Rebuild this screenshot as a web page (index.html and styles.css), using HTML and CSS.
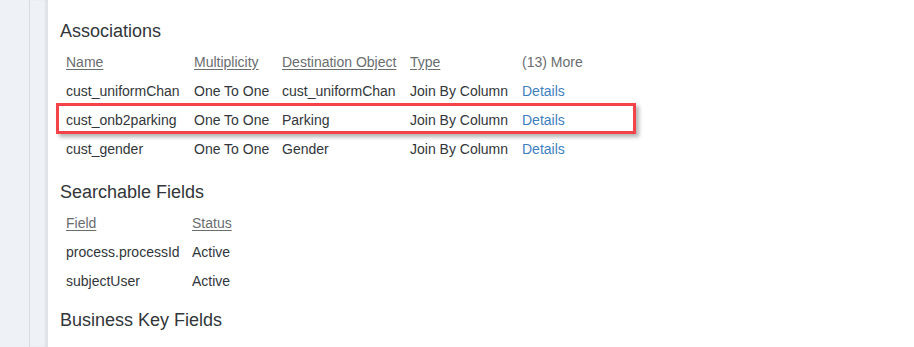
FILE: index.html
```html
<!DOCTYPE html>
<html lang="en">
<head>
    <meta charset="UTF-8">
    <meta name="viewport" content="width=device-width, initial-scale=1.0">
    <title>Object Definition</title>
    <link rel="stylesheet" href="styles.css">
</head>
<body>
    <div class="page">
        <div class="side">
            <div class="rail"></div>
            <div class="gutter"></div>
        </div>

        <div class="content">
            <section class="section">
                <h2>Associations</h2>
                <div class="table-wrap">
                    <table class="grid assoc">
                        <thead>
                            <tr>
                                <th class="c-name"><span>Name</span></th>
                                <th class="c-mult"><span>Multiplicity</span></th>
                                <th class="c-dest"><span>Destination Object</span></th>
                                <th class="c-type"><span>Type</span></th>
                                <th class="more">(13) More</th>
                            </tr>
                        </thead>
                        <tbody>
                            <tr>
                                <td>cust_uniformChan</td>
                                <td>One To One</td>
                                <td>cust_uniformChan</td>
                                <td>Join By Column</td>
                                <td><a href="#">Details</a></td>
                            </tr>
                            <tr>
                                <td>cust_onb2parking</td>
                                <td>One To One</td>
                                <td>Parking</td>
                                <td>Join By Column</td>
                                <td><a href="#">Details</a></td>
                            </tr>
                            <tr>
                                <td>cust_gender</td>
                                <td>One To One</td>
                                <td>Gender</td>
                                <td>Join By Column</td>
                                <td><a href="#">Details</a></td>
                            </tr>
                        </tbody>
                    </table>
                    <!-- annotation box drawn over the second row -->
                    <div class="mark"></div>
                </div>
            </section>

            <section class="section searchable">
                <h2>Searchable Fields</h2>
                <table class="grid search">
                    <thead>
                        <tr>
                            <th class="c-field"><span>Field</span></th>
                            <th><span>Status</span></th>
                        </tr>
                    </thead>
                    <tbody>
                        <tr>
                            <td>process.processId</td>
                            <td>Active</td>
                        </tr>
                        <tr>
                            <td>subjectUser</td>
                            <td>Active</td>
                        </tr>
                    </tbody>
                </table>
            </section>

            <section class="section keys">
                <h2>Business Key Fields</h2>
            </section>
        </div>
    </div>
</body>
</html>
```

FILE: styles.css
```css
:root {
    --text-color: #32363a;
    --label-color: #6a6d70;
    --link-color: #3f7fbf;
    --shell-bg: #eef2f6;
    --shell-line: #d6dce3;
    --mark-color: #f4444a;
}

body {
    margin: 0;
    font-family: "Liberation Sans", Arial, sans-serif;
    color: var(--text-color);
    background: #fff;
}

.page {
    display: flex;
    min-height: 347px;
}

.side {
    display: flex;
    flex-shrink: 0;
    background: var(--shell-bg);
}

.rail {
    width: 29px;
    border-right: 1px solid var(--shell-line);
}

.gutter {
    width: 17px;
    border-right: 1px solid #dfe3e8;
    box-shadow: inset -2px 0 2px rgba(0, 0, 0, 0.06);
}

.content {
    flex: 1;
    padding: 0 0 0 12px;
}

h2 {
    margin: 13px 0 2px;
    font-size: 18px;
    font-weight: normal;
    line-height: 28px;
}

.section:first-child h2 {
    margin-top: 17px;
}

.searchable h2 {
    margin-top: 15px;
}

.keys h2 {
    margin-top: 11px;
}

.grid {
    border-collapse: collapse;
    font-size: 14px;
}

.grid th,
.grid td {
    height: 29px;
    padding: 0 0 0 6px;
    text-align: left;
    white-space: nowrap;
    vertical-align: middle;
}

.grid th {
    font-weight: normal;
    color: var(--label-color);
}

.grid th span {
    text-decoration: underline;
    text-underline-offset: 2px;
}

.grid a {
    color: var(--link-color);
    text-decoration: none;
}

.c-name { width: 122px; }
.c-mult { width: 82px; }
.c-dest { width: 122px; }
.c-type { width: 106px; }
.c-field { width: 120px; }

.table-wrap {
    position: relative;
}

.mark {
    position: absolute;
    left: -4px;
    top: 56px;
    width: 574px;
    height: 25px;
    border: 3px solid var(--mark-color);
    box-shadow: 3px 3px 4px rgba(0, 0, 0, 0.3);
    pointer-events: none;
}
```
